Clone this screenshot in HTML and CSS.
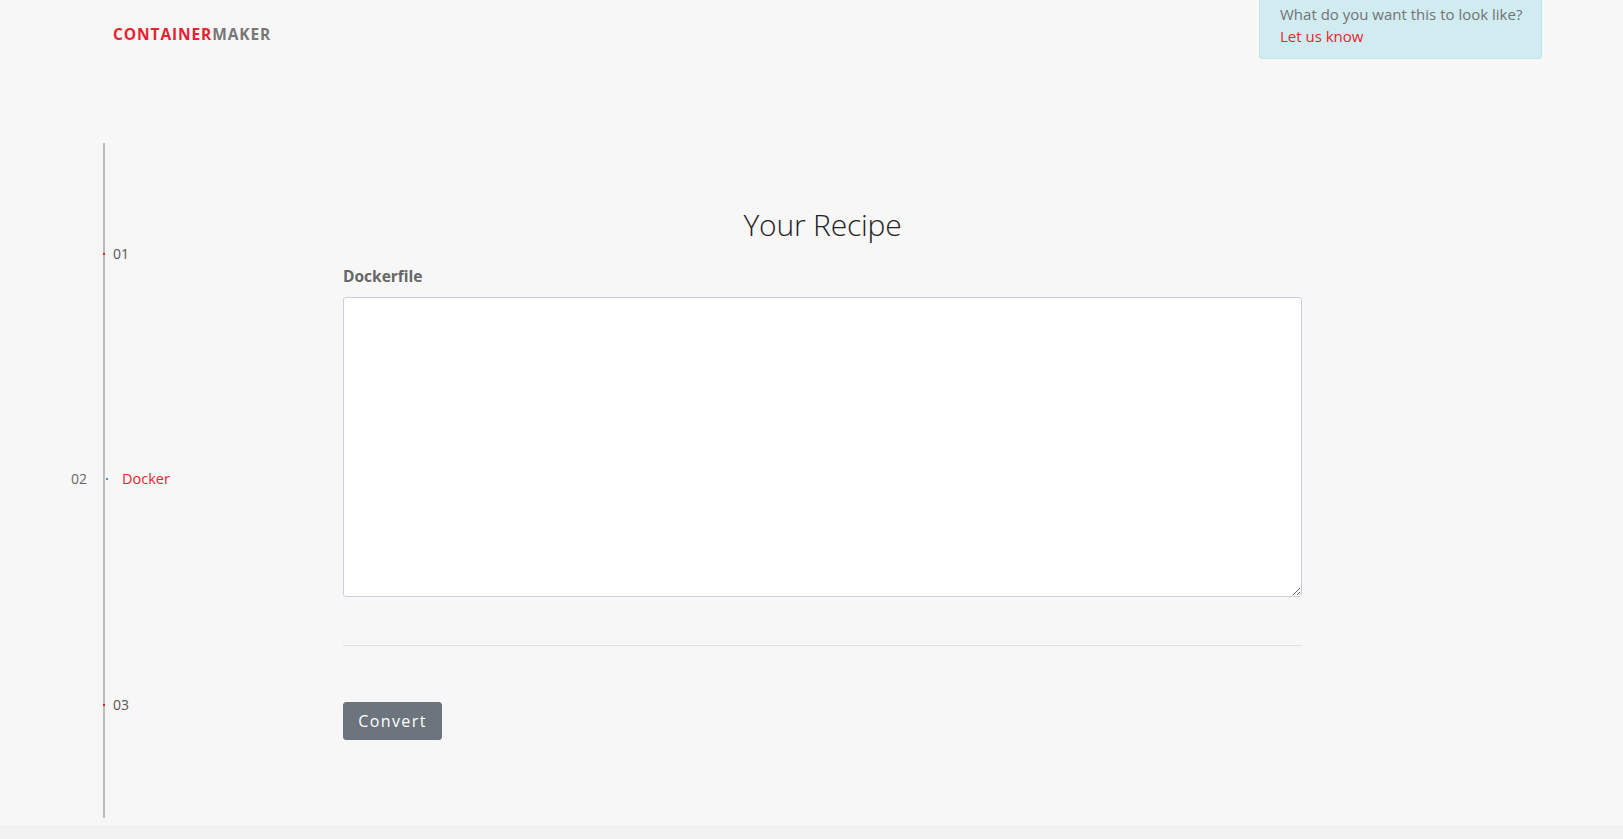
FILE: index.html
```html
<!DOCTYPE html>
<html lang="en">
<head>
<meta charset="utf-8">
<title>ContainerMaker</title>
<link rel="stylesheet" href="styles.css">
</head>
<body>
<header class="topbar">
  <a class="logo" href="#"><span class="logo-red">CONTAINER</span><span class="logo-grey">MAKER</span></a>
  <div class="feedback">
    <div class="feedback-q">What do you want this to look like?</div>
    <a class="feedback-link" href="#">Let us know</a>
  </div>
</header>
<div class="page">
  <nav class="timeline">
    <div class="tl-line"></div>
    <span class="tl-dot dot-red row1"></span>
    <span class="tl-label row1">01</span>
    <span class="tl-num row2">02</span>
    <span class="tl-dot dot-blue row2"></span>
    <span class="tl-label tl-active row2">Docker</span>
    <span class="tl-dot dot-red row3"></span>
    <span class="tl-label row3">03</span>
  </nav>
  <main class="content">
    <h1 class="title">Your Recipe</h1>
    <label class="field-label" for="dockerfile">Dockerfile</label>
    <textarea id="dockerfile" class="editor"></textarea>
    <hr class="divider">
    <button class="btn" type="button">Convert</button>
  </main>
</div>
<footer class="footband"></footer>
</body>
</html>
```
FILE: styles.css
```css
* { box-sizing: border-box; }
html, body { margin: 0; padding: 0; }
body {
  background: #f7f7f7;
  font-family: "Open Sans", "Liberation Sans", sans-serif;
  color: #333;
  overflow: hidden;
}
.topbar {
  height: 143px;
  display: flex;
  justify-content: space-between;
  align-items: flex-start;
  padding: 0 81px 0 113px;
}
.logo {
  margin-top: 24px;
  font-size: 15.5px;
  font-weight: 700;
  letter-spacing: 0.9px;
  text-decoration: none;
  line-height: 20px;
}
.logo-red { color: #e8222e; }
.logo-grey { color: #777777; }
.feedback {
  width: 283px;
  height: 59px;
  background: #d1ecf1;
  border: 1px solid #bee5eb;
  border-top: none;
  border-radius: 0 0 4px 4px;
  padding: 3px 20px 12px 20px;
  font-size: 15px;
  line-height: 22px;
}
.feedback-q { color: #737373; white-space: nowrap; }
.feedback-link { color: #e8222e; text-decoration: none; }
.page {
  display: flex;
}
.timeline {
  width: 343px;
  flex: none;
  display: grid;
  grid-template-columns: 103px 2px 1fr;
  grid-template-rows: 222px 227px 226px;
  height: 675px;
}
.tl-line {
  grid-column: 2;
  grid-row: 1 / 4;
  background: #bdbdbd;
}
.row1 { grid-row: 1; }
.row2 { grid-row: 2; }
.row3 { grid-row: 3; }
.tl-dot {
  grid-column: 2;
  align-self: center;
  width: 2px;
  height: 2px;
  z-index: 1;
}
.dot-red { background: #e8222e; }
.dot-blue { background: #4a90c8; grid-column: 3; justify-self: start; margin-left: 1px; }
.tl-label {
  grid-column: 3;
  align-self: center;
  padding-left: 8px;
  font-size: 14px;
  color: #555;
  line-height: 18px;
}
.tl-active {
  padding-left: 17px;
  color: #e8222e;
  font-size: 14.5px;
}
.tl-num {
  grid-column: 1;
  align-self: center;
  justify-self: end;
  padding-right: 16px;
  font-size: 14px;
  color: #666;
  line-height: 18px;
}
.content {
  width: 959px;
  flex: none;
  display: flex;
  flex-direction: column;
  align-items: flex-start;
}
.title {
  align-self: stretch;
  text-align: center;
  margin: 64px 0 0 0;
  font-size: 30px;
  line-height: 36px;
  font-weight: 300;
  color: #222;
  letter-spacing: -0.2px;
}
.field-label {
  margin-top: 21px;
  font-size: 15.5px;
  line-height: 24px;
  font-weight: 700;
  color: #666;
}
.editor {
  margin-top: 9px;
  width: 100%;
  height: 300px;
  background: #fff;
  border: 1px solid #cbcfdb;
  border-radius: 3px;
  resize: vertical;
  font-family: "Liberation Mono", monospace;
  font-size: 14px;
  padding: 6px 12px;
}
.divider {
  align-self: stretch;
  margin: 48px 0 0 0;
  border: 0;
  border-top: 1px solid #e0e0e0;
  height: 0;
}
.btn {
  margin-top: 56px;
  height: 38px;
  width: 99px;
  padding: 0;
  background: #6c757d;
  color: #fff;
  border: 1px solid #6c757d;
  border-radius: 3px;
  font-family: "Open Sans", "Liberation Sans", sans-serif;
  font-size: 16px;
  letter-spacing: 1.4px;
  cursor: pointer;
}
.footband {
  margin-top: 7px;
  height: 20px;
  background: #f2f2f2;
}
```
